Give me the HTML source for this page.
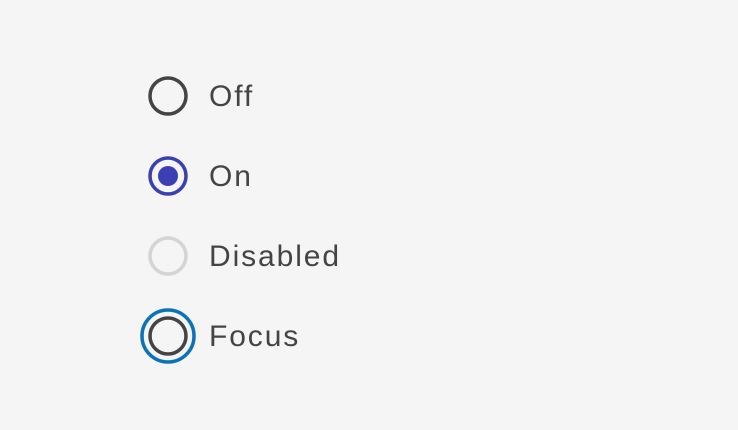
<!DOCTYPE html>
<html><head><style>
html,body{margin:0;padding:0;background:#f5f5f5;width:738px;height:430px;overflow:hidden}
.t{position:absolute;left:209px;font-family:"Liberation Sans",sans-serif;font-size:30px;color:#444;letter-spacing:1.9px;line-height:1}
svg{position:absolute;left:0;top:0}
</style></head><body>
<svg width="738" height="430">
<circle cx="168" cy="96" r="18" fill="none" stroke="#444" stroke-width="3.5"/>
<circle cx="168" cy="176" r="18" fill="none" stroke="#3c3fb3" stroke-width="3.5"/>
<circle cx="168" cy="176" r="10" fill="#3c3fb3"/>
<circle cx="168" cy="256" r="18" fill="none" stroke="#d4d4d4" stroke-width="3.5"/>
<circle cx="168" cy="336" r="26" fill="none" stroke="#0a73b8" stroke-width="3.5"/>
<circle cx="168" cy="336" r="18" fill="none" stroke="#444" stroke-width="3.5"/>
</svg>
<div class="t" style="top:82px">Off</div>
<div class="t" style="top:162px">On</div>
<div class="t" style="top:242px">Disabled</div>
<div class="t" style="top:322px">Focus</div>
</body></html>
